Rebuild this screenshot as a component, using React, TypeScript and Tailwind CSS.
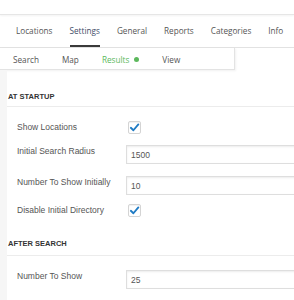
import React from "react";

const tabs = ["Locations", "Settings", "General", "Reports", "Categories", "Info"];

function Check() {
  return (
    <div className="w-[13px] h-[13px] shrink-0 border border-[#d4d4d4] rounded-[2px] bg-white flex items-center justify-center shadow-[inset_0_1px_1px_rgba(0,0,0,0.06)]">
      <svg width="11" height="11" viewBox="0 0 12 12">
        <path d="M2 6.3 L4.8 9 L10.2 2.6" fill="none" stroke="#1f7bc4" strokeWidth="2" strokeLinecap="round" strokeLinejoin="round" />
      </svg>
    </div>
  );
}

function Input({ value }: { value: string }) {
  return (
    <div className="w-[200px] shrink-0 h-[19px] border border-[#dedede] shadow-[inset_0_1px_2px_rgba(0,0,0,0.08)] bg-white flex items-center pl-[4px] pt-[1px] text-[8.5px] text-[#555]">
      {value}
    </div>
  );
}

export default function App() {
  return (
    <div
      className="w-[294px] h-[300px] bg-white overflow-hidden relative"
      style={{ fontFamily: '"Liberation Sans", Arial, sans-serif' }}
    >
      <div className="h-[15px] border-b border-[#e6e6e6] shadow-[0_1px_2px_rgba(0,0,0,0.05)]" />
      <div
        className="h-[33px] flex items-stretch pl-[16px] gap-[17px] border-b border-[#e2e2e2] text-[8.2px] text-[#555]"
        style={{ fontFamily: '"Open Sans", sans-serif' }}
      >
        {tabs.map((t) => (
          <div key={t} className="relative flex items-center shrink-0">
            <span className={t === "Settings" ? "text-[#3f4d68]" : ""}>{t}</span>
            {t === "Settings" && (
              <div className="absolute left-0 right-0 bottom-[0px] h-[2px] bg-[#3a3a3a]" />
            )}
          </div>
        ))}
      </div>
      <div
        className="w-[235px] h-[22px] flex items-center pt-[3px] pl-[13px] gap-[23px] border-r border-b border-[#e3e3e3] shadow-[1px_1px_2px_rgba(0,0,0,0.06)] text-[8.2px] text-[#555]"
        style={{ fontFamily: '"Open Sans", sans-serif' }}
      >
        <span>Search</span>
        <span>Map</span>
        <span className="text-[#5cb85c] flex items-center gap-[5px]">
          Results
          <span className="w-[5px] h-[5px] rounded-full bg-[#5cb85c] inline-block" />
        </span>
        <span>View</span>
      </div>
      <div className="flex">
        <div className="w-[7px] shrink-0 h-[240px] bg-[#f6f6f6]" />
        <div className="flex-1 min-w-0">
          <div className="mt-[22px] h-[15px] border-b border-[#ececec] leading-[10px] pl-[1px] text-[7.5px] font-bold text-[#333]">
            AT STARTUP
          </div>
          <div className="pl-[10px] text-[8.5px] text-[#555]">
            <div className="mt-[14px] flex items-center h-[13px]">
              <div className="w-[111px] shrink-0">Show Locations</div>
              <Check />
            </div>
            <div className="mt-[11px] flex items-start">
              <div className="w-[109px] shrink-0 pt-[1px] leading-[10px]">Initial Search Radius</div>
              <Input value="1500" />
            </div>
            <div className="mt-[12px] flex items-start">
              <div className="w-[109px] shrink-0 pt-[1px] leading-[10px]">Number To Show Initially</div>
              <Input value="10" />
            </div>
            <div className="mt-[9px] flex items-center h-[13px]">
              <div className="w-[111px] shrink-0">Disable Initial Directory</div>
              <Check />
            </div>
          </div>
          <div className="mt-[22px] h-[17px] border-b border-[#ececec] leading-[10px] pl-[1px] text-[7.5px] font-bold text-[#333]">
            AFTER SEARCH
          </div>
          <div className="pl-[10px] text-[8.5px] text-[#555]">
            <div className="mt-[14px] flex items-start">
              <div className="w-[109px] shrink-0 pt-[1px] leading-[10px]">Number To Show</div>
              <Input value="25" />
            </div>
          </div>
        </div>
      </div>
    </div>
  );
}
